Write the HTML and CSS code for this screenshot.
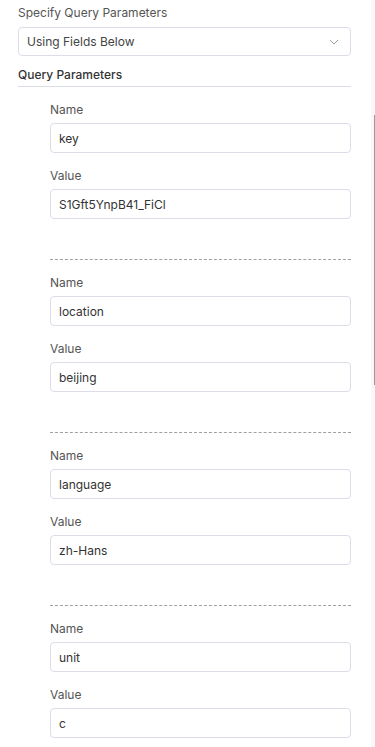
FILE: index.html
```html
<!DOCTYPE html>
<html lang="en">
<head>
  <meta charset="UTF-8" />
  <meta name="viewport" content="width=device-width, initial-scale=1.0"/>
  <title>Query Parameters</title>
  <link rel="stylesheet" href="styles.css">
</head>
<body>
  <div class="panel">
    <div class="content">
      <label class="field-label">Specify Query Parameters</label>
      <div class="select">
        <span>Using Fields Below</span>
        <svg class="chevron" width="10" height="6" viewBox="0 0 10 6">
          <path d="M1 1l4 4 4-4" fill="none" stroke="#a0a0a8" stroke-width="1"/>
        </svg>
      </div>

      <div class="section-title">Query Parameters</div>

      <div class="param">
        <label class="small-label">Name</label>
        <div class="input">key</div>
        <label class="small-label">Value</label>
        <div class="input">S1Gft5YnpB41_FiCl</div>
      </div>

      <div class="param">
        <label class="small-label">Name</label>
        <div class="input">location</div>
        <label class="small-label">Value</label>
        <div class="input">beijing</div>
      </div>

      <div class="param">
        <label class="small-label">Name</label>
        <div class="input">language</div>
        <label class="small-label">Value</label>
        <div class="input">zh-Hans</div>
      </div>

      <div class="param">
        <label class="small-label">Name</label>
        <div class="input">unit</div>
        <label class="small-label">Value</label>
        <div class="input">c</div>
      </div>
    </div>

    <div class="scroll-track">
      <div class="scroll-thumb"></div>
    </div>
  </div>
</body>
</html>
```

FILE: styles.css
```css
body {
  margin: 0;
  padding: 0;
  background: #fff;
  font-family: 'Inter', 'Noto Sans', sans-serif;
  color: #333;
  overflow: hidden;
}

.panel {
  display: flex;
  height: 747px;
}

.content {
  flex: 1;
  padding: 5px 20px 0 18px;
}

.field-label {
  display: block;
  font-size: 12px;
  line-height: 16px;
  color: #555;
  margin-bottom: 6px;
}

.select {
  display: flex;
  align-items: center;
  justify-content: space-between;
  height: 27px;
  padding: 0 11px 0 8px;
  border: 1px solid #dcdde6;
  border-radius: 4px;
  font-size: 12px;
  color: #444;
}

.chevron {
  margin-top: 1px;
}

.section-title {
  margin-top: 11px;
  padding-bottom: 3px;
  border-bottom: 1px solid #dcdde6;
  font-size: 12px;
  line-height: 16px;
  font-weight: 500;
  color: #333;
}

.param {
  margin-left: 32px;
  padding: 15px 0 40px;
  border-bottom: 1px dashed #a0a0a0;
}

.param:last-child {
  border-bottom: none;
}

.small-label {
  display: block;
  font-size: 12px;
  line-height: 16px;
  color: #555;
  margin-bottom: 5px;
}

.input {
  display: flex;
  align-items: center;
  height: 28px;
  padding: 0 8px;
  border: 1px solid #dcdde6;
  border-radius: 4px;
  font-size: 12px;
  color: #333;
  margin-bottom: 15px;
}

.input:last-child {
  margin-bottom: 0;
}

.scroll-track {
  position: relative;
  width: 4px;
  background: #f8f8f8;
}

.scroll-thumb {
  position: absolute;
  right: 0;
  top: 115px;
  width: 1px;
  height: 270px;
  background: #9a9a9a;
}
```
